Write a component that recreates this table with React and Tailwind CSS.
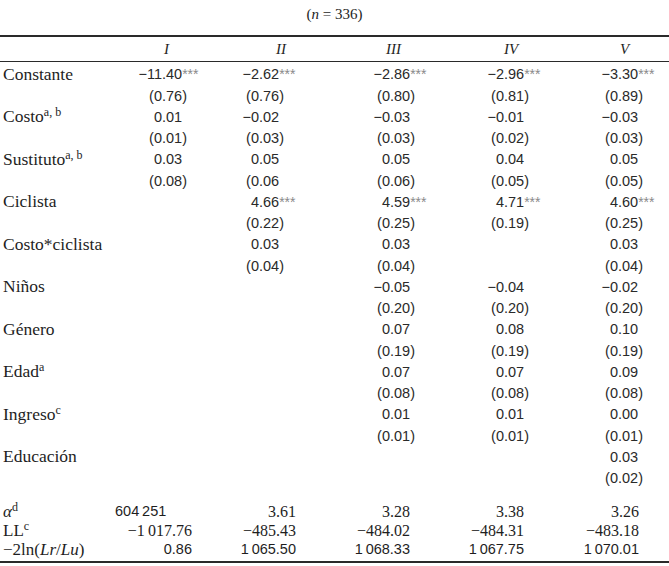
import React from 'react';

// column geometry: where the decimal point sits inside each cell, header offset, right edge of summary rows
const COLS = [
  { intW: 'w-[47px]', head: 'pl-[49px]', tail: 'pr-[23px]' },
  { intW: 'w-[44px]', head: 'pl-[61px]', tail: 'pr-[39px]' },
  { intW: 'w-[55px]', head: 'pl-[51px]', tail: 'pr-[40px]' },
  { intW: 'w-[54px]', head: 'pl-[54px]', tail: 'pr-[41px]' },
  { intW: 'w-[53px]', head: 'pl-[55px]', tail: 'pr-[30px]' },
];

const HEADERS = ['I', 'II', 'III', 'IV', 'V'];

const ROWS = [
  { label: 'Constante', vals: ['−11.40***', '−2.62***', '−2.86***', '−2.96***', '−3.30***'] },
  { vals: ['(0.76)', '(0.76)', '(0.80)', '(0.81)', '(0.89)'] },
  { label: 'Costo', sup: 'a, b', vals: ['0.01', '−0.02', '−0.03', '−0.01', '−0.03'] },
  { vals: ['(0.01)', '(0.03)', '(0.03)', '(0.02)', '(0.03)'] },
  { label: 'Sustituto', sup: 'a, b', vals: ['0.03', '0.05', '0.05', '0.04', '0.05'] },
  { vals: ['(0.08)', '(0.06', '(0.06)', '(0.05)', '(0.05)'] },
  { label: 'Ciclista', vals: ['', '4.66***', '4.59***', '4.71***', '4.60***'] },
  { vals: ['', '(0.22)', '(0.25)', '(0.19)', '(0.25)'] },
  { label: 'Costo*ciclista', vals: ['', '0.03', '0.03', '', '0.03'] },
  { vals: ['', '(0.04)', '(0.04)', '', '(0.04)'] },
  { label: 'Niños', vals: ['', '', '−0.05', '−0.04', '−0.02'] },
  { vals: ['', '', '(0.20)', '(0.20)', '(0.20)'] },
  { label: 'Género', vals: ['', '', '0.07', '0.08', '0.10'] },
  { vals: ['', '', '(0.19)', '(0.19)', '(0.19)'] },
  { label: 'Edad', sup: 'a', vals: ['', '', '0.07', '0.07', '0.09'] },
  { vals: ['', '', '(0.08)', '(0.08)', '(0.08)'] },
  { label: 'Ingreso', sup: 'c', vals: ['', '', '0.01', '0.01', '0.00'] },
  { vals: ['', '', '(0.01)', '(0.01)', '(0.01)'] },
  { label: 'Educación', vals: ['', '', '', '', '0.03'] },
  { vals: ['', '', '', '', '(0.02)'] },
];

const serif = "font-['Liberation_Serif',serif]";
const sans = "font-['Liberation_Sans',sans-serif]";

function Num({ v, col }) {
  if (!v) return <div />;
  const stars = v.endsWith('***') ? '***' : '';
  const core = stars ? v.slice(0, -3) : v;
  const i = core.indexOf('.');
  return (
    <div className={`flex items-baseline whitespace-nowrap leading-none ${sans} text-[14.5px] text-[#2a2a2a]`}>
      <span className={`${col.intW} shrink-0 text-right`}>{core.slice(0, i)}</span>
      <span>{core.slice(i)}</span>
      <span className="text-[14px] text-[#8a8a8a]">{stars}</span>
    </div>
  );
}

const GRID = 'grid grid-cols-[115px_100px_120px_115px_115px_104px] items-center';

export default function App() {
  return (
    <div className={`w-[669px] h-[566px] bg-white text-[#1e1e1e] ${serif}`}>
      <div className="h-[35px] pt-[4px] text-center text-[15px] leading-[20px]">
        (<i>n</i> = 336)
      </div>
      <div className="h-[2px] bg-[#2a2a2a]" />

      <div className={`${GRID} h-[24px]`}>
        <div />
        {HEADERS.map((h, i) => (
          <div key={h} className={`${COLS[i].head} italic text-[15px]`}>{h}</div>
        ))}
      </div>
      <div className="h-px bg-[#2a2a2a]" />

      <div className="pt-[2px]">
        {ROWS.map((r, ri) => (
          <div key={ri} className={`${GRID} h-[21.25px]`}>
            <div className="pl-[3px] text-[17.5px] leading-none whitespace-nowrap">
              {r.label}
              {r.sup && <sup className="text-[12px]">{r.sup}</sup>}
            </div>
            {r.vals.map((v, i) => (
              <Num key={i} v={v} col={COLS[i]} />
            ))}
          </div>
        ))}
      </div>

      <div className="pt-[13px] leading-none whitespace-nowrap">
        <div className={`${GRID} h-[19px]`}>
          <div className="pl-[3px] text-[17px]"><i>α</i><sup className="text-[12px]">d</sup></div>
          <div className={`pr-[53px] text-right ${sans} text-[14.5px]`}>{'604\u202F251'}</div>
          {['3.61', '3.28', '3.38', '3.26'].map((v, i) => (
            <div key={v} className={`${COLS[i + 1].tail} text-right text-[16px]`}>{v}</div>
          ))}
        </div>
        <div className={`${GRID} h-[19px]`}>
          <div className="pl-[3px] text-[17px]">LL<sup className="text-[12px]">c</sup></div>
          {['−1\u202F017.76', '−485.43', '−484.02', '−484.31', '−483.18'].map((v, i) => (
            <div key={v} className={`${COLS[i].tail} text-right text-[16px]`}>{v}</div>
          ))}
        </div>
        <div className={`${GRID} h-[19px]`}>
          <div className="pl-[3px] text-[17px]">−2ln(<i>Lr</i>/<i>Lu</i>)</div>
          {['0.86', '1\u202F065.50', '1\u202F068.33', '1\u202F067.75', '1\u202F070.01'].map((v, i) => (
            <div key={v} className={`${COLS[i].tail} text-right ${sans} text-[14.5px]`}>{v}</div>
          ))}
        </div>
      </div>
      <div className="mt-[2px] h-[2px] bg-[#2a2a2a]" />
    </div>
  );
}
